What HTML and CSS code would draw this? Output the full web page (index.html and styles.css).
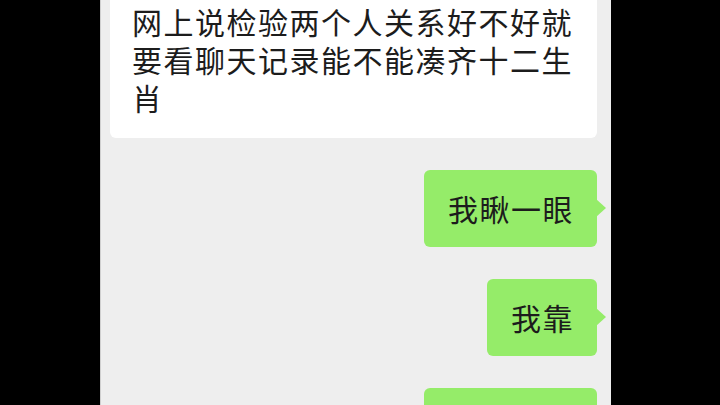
FILE: index.html
```html
<!DOCTYPE html>
<html lang="zh-CN">
<head>
    <meta charset="UTF-8">
    <meta name="viewport" content="width=device-width, initial-scale=1.0">
    <title>聊天记录</title>
    <link rel="stylesheet" href="styles.css">
</head>
<body>
    <div class="frame">
        <div class="chat-screen">
            <div class="message-list">
                <div class="message them">
                    <div class="bubble">网上说检验两个人关系好不好就要看聊天记录能不能凑齐十二生肖</div>
                </div>
                <div class="message me">
                    <div class="bubble">我瞅一眼</div>
                </div>
                <div class="message me">
                    <div class="bubble">我靠</div>
                </div>
                <!-- next bubble, scrolled past the bottom edge -->
                <div class="message me">
                    <div class="bubble partial"></div>
                </div>
            </div>
        </div>
    </div>
</body>
</html>
```

FILE: styles.css
```css
/* Base */
body, html {
    margin: 0;
    padding: 0;
    height: 100%;
    background-color: #000;
    overflow: hidden;
}

/* Video frame with black bars */
.frame {
    display: flex;
    height: 405px;
    padding-left: 100px;
}

.chat-screen {
    width: 510px;
    height: 405px;
    background-color: #eeeeee;
    border-left: 1px solid #cfcfcf;
    overflow: hidden;
    font-family: "Noto Sans CJK SC", "Noto Sans", sans-serif;
}

/* Messages */
.message-list {
    display: flex;
    flex-direction: column;
    gap: 32px;
    margin-top: -18px;
}

.message {
    display: flex;
}

.them {
    padding-left: 9px;
    padding-right: 14px;
}

.me {
    justify-content: flex-end;
    padding-right: 14px;
}

.bubble {
    position: relative;
    font-size: 30px;
    line-height: 38px;
    letter-spacing: 1.5px;
    color: #1c1c1c;
    border-radius: 6px;
}

.them .bubble {
    background-color: #fff;
    padding: 20px 20px 22px 22px;
}

.me .bubble {
    background-color: #95ec69;
    padding: 19px 23px 20px 24px;
}

.me .partial {
    width: 126px;
    height: 38px;
}

/* Tail on the right */
.me .bubble::after {
    content: "";
    position: absolute;
    right: -9px;
    top: 29px;
    border-top: 9px solid transparent;
    border-bottom: 9px solid transparent;
    border-left: 10px solid #95ec69;
}
```
